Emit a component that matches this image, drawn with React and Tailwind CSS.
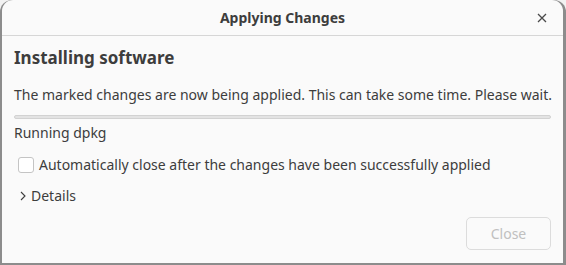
import React from 'react';

const font = { fontFamily: '"Noto Sans", "DejaVu Sans", sans-serif' };

export default function App() {
  return (
    <div className="w-[566px] h-[265px] bg-[#f2f2f2] overflow-hidden" style={font}>
      <div className="w-full h-full pl-[2px] pr-[3px] pb-[2px] bg-[#8c8c8c] rounded-t-[12px]">
        <div className="h-full bg-[#fafafa] rounded-t-[11px] flex flex-col text-[#3d3d3d]">
          {/* header bar */}
          <div className="relative h-[36px] shrink-0 border-b border-[#d6d6d6] flex items-center justify-center">
            <span className="text-[14px] font-bold leading-5">Applying Changes</span>
            <button className="absolute right-[13px] top-[10px] w-[16px] h-[16px] flex items-center justify-center text-[#4a4a4a]">
              <svg width="10" height="10" viewBox="0 0 10 10" fill="none" stroke="currentColor" strokeWidth="1.3">
                <path d="M1 1 L9 9 M9 1 L1 9" />
              </svg>
            </button>
          </div>

          <div className="flex flex-col px-[12px] whitespace-nowrap">
            <h1 className="mt-[11px] text-[17px] font-bold leading-[22px]">Installing software</h1>
            <p className="mt-[16px] text-[14px] leading-5">
              The marked changes are now being applied. This can take some time. Please wait.
            </p>
            <div className="mt-[10px] h-[4px] rounded-full bg-[#e3e3e3] border border-[#d2d2d2]" />
            <div className="mt-[4px] text-[14px] leading-5">Running dpkg</div>

            <label className="mt-[12px] flex items-center h-5 pl-[4px]">
              <span className="w-[16px] h-[16px] rounded-[3px] border border-[#c4c4c4] bg-white shrink-0" />
              <span className="ml-[5px] text-[14px] leading-5">
                Automatically close after the changes have been successfully applied
              </span>
            </label>

            <div className="mt-[11px] flex items-center h-5 pl-[6px]">
              <svg width="6" height="10" viewBox="0 0 6 10" fill="none" stroke="#3d3d3d" strokeWidth="1.1">
                <path d="M1 1 L5 5 L1 9" />
              </svg>
              <span className="ml-[5px] text-[14px] leading-5">Details</span>
            </div>

            <div className="mt-[11px] flex justify-end">
              <button className="w-[85px] h-[33px] rounded-[5px] border border-[#dcdcdc] bg-[#fafafa] text-[14px] text-[#c0c0c0]">
                Close
              </button>
            </div>
          </div>
        </div>
      </div>
    </div>
  );
}
